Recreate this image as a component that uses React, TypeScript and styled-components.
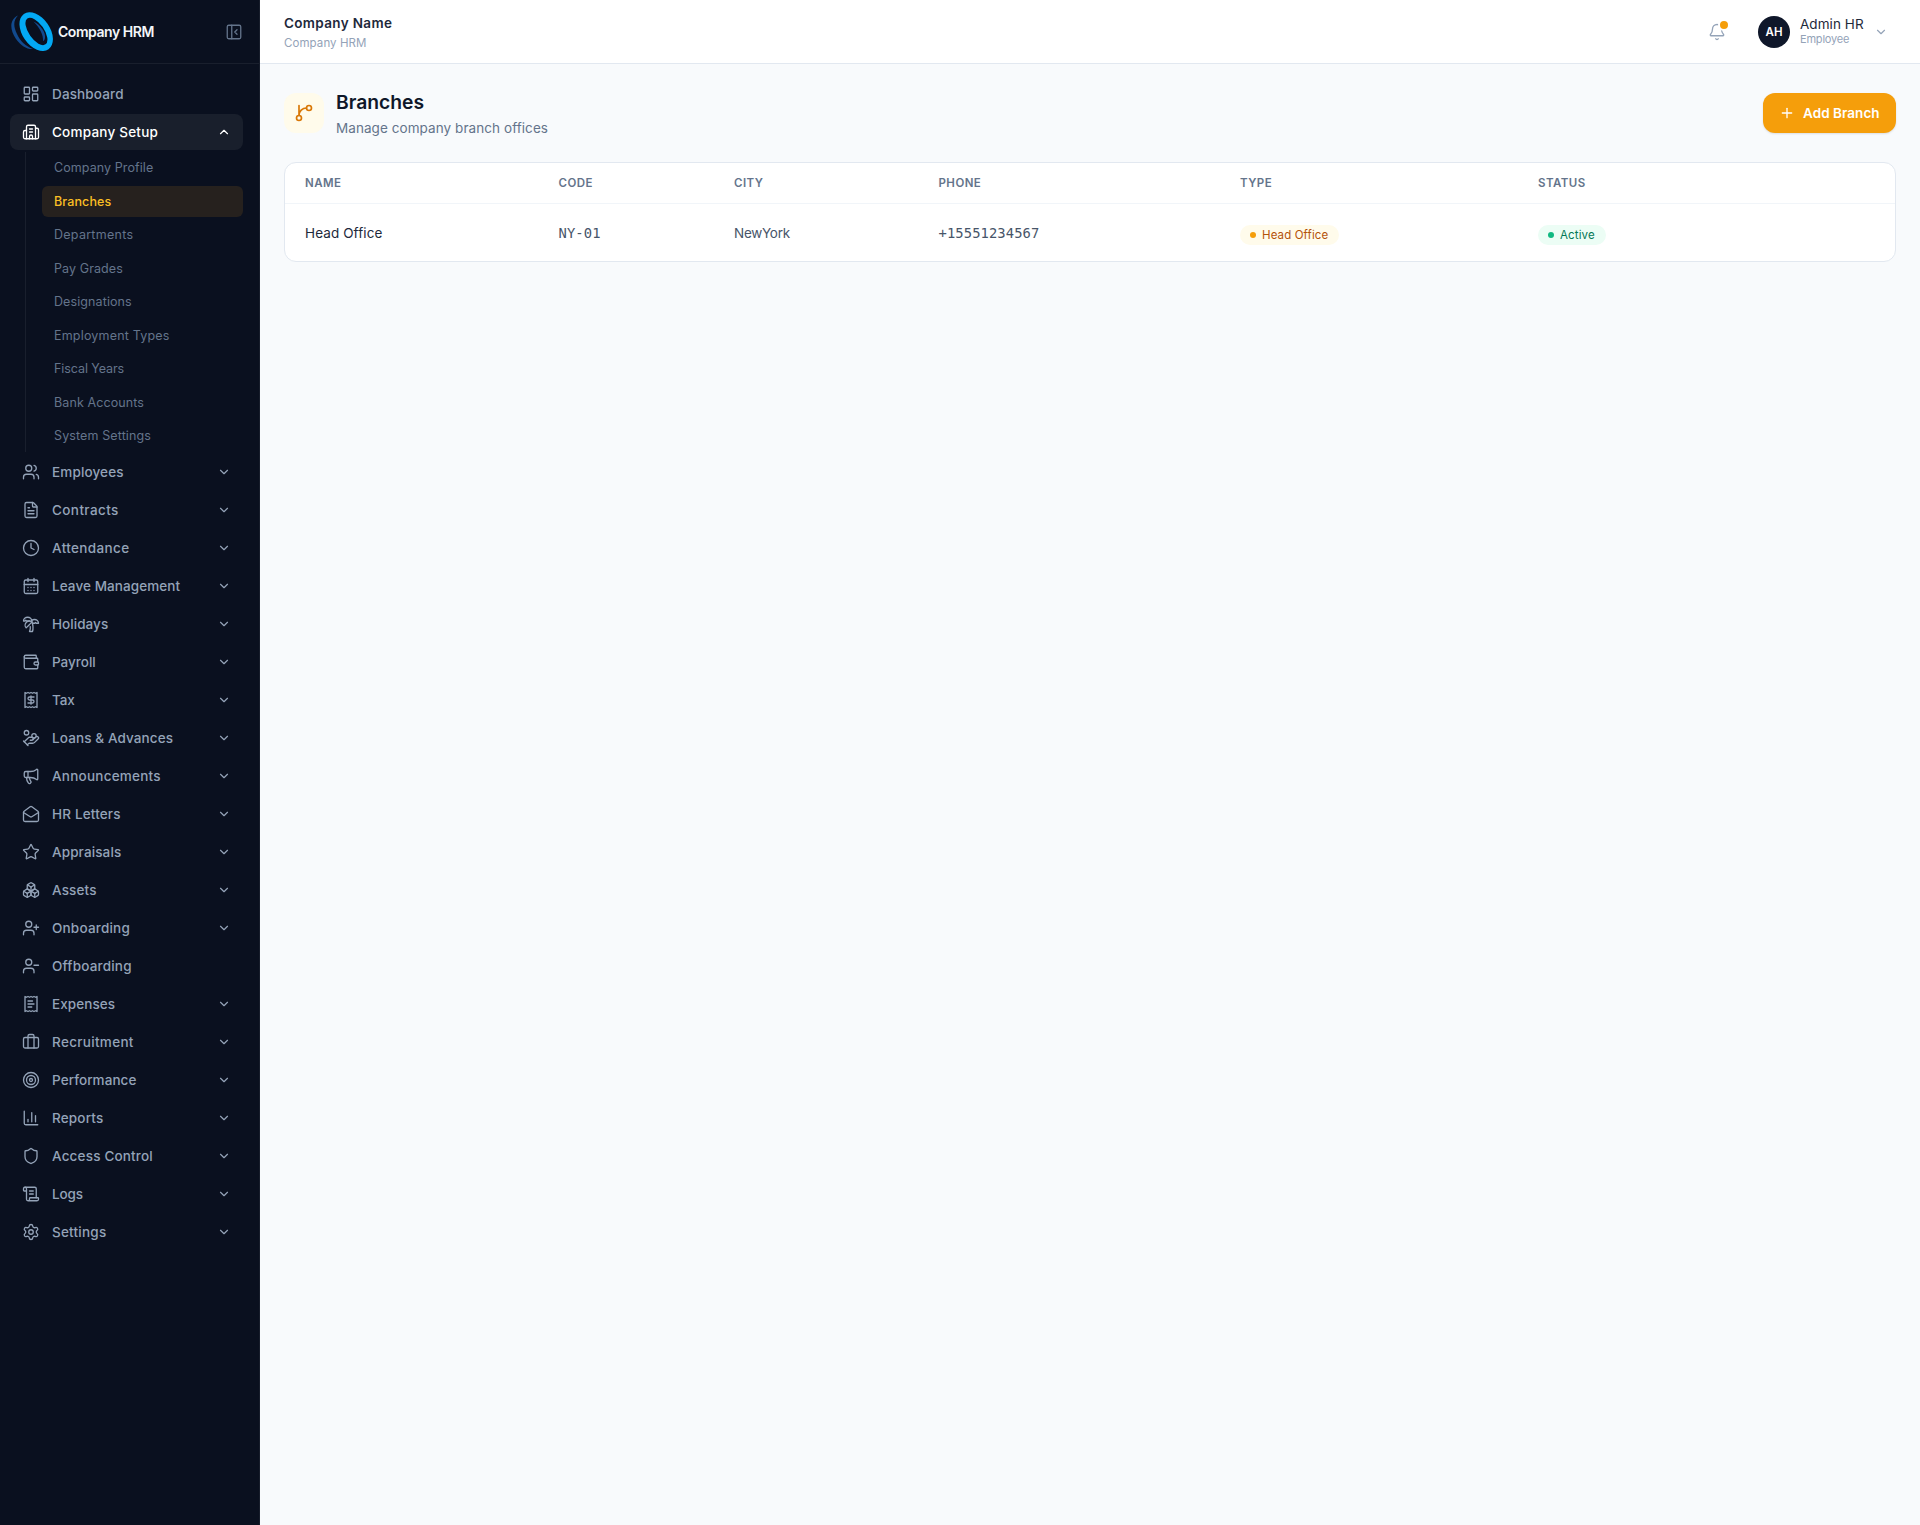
import React from "react";
import styled, { createGlobalStyle, css } from "styled-components";
import {
  LayoutDashboard, Building2, Users, FileText, Clock, CalendarDays, Palmtree, Wallet,
  HandCoins, Megaphone, MailOpen, Star, Boxes, UserPlus, UserMinus, Briefcase, Target,
  ChartColumn, Shield, ScrollText, Settings, ChevronDown, ChevronUp, PanelLeftClose, Bell, Plus,
} from "lucide-react";

const GlobalStyle = createGlobalStyle`
  *, *::before, *::after { box-sizing: border-box; }
  body { margin: 0; background: #f8fafc; font-family: "Inter", "Liberation Sans", sans-serif; }
  button { font: inherit; border: 0; background: none; padding: 0; cursor: pointer; }
`;

const Shell = styled.div`
  display: grid;
  grid-template-columns: 260px minmax(0, 1fr);
  min-height: 100vh;
`;

/* Sidebar */
const Sidebar = styled.aside`
  background: #0a101f;
  border-right: 1px solid #171d2b;
`;

const Brand = styled.div`
  display: flex;
  align-items: center;
  height: 64px;
  padding: 0 16px 0 10px;
  border-bottom: 1px solid #191f2d;
`;

const BrandName = styled.span`
  flex: 1;
  margin-left: 4px;
  font-size: 14px;
  font-weight: 600;
  letter-spacing: -0.45px;
  color: #f4f6f9;
`;

const CollapseButton = styled.button`
  display: flex;
  color: #64748b;
`;

const Nav = styled.nav`
  display: flex;
  flex-direction: column;
  gap: 2px;
  padding: 12px 16px 12px 10px;
`;

const NavItem = styled.a<{ $active?: boolean }>`
  display: flex;
  align-items: center;
  gap: 12px;
  height: 36px;
  padding: 0 12px;
  border-radius: 8px;
  color: ${(p) => (p.$active ? "#ffffff" : "#94a3b8")};
  background: ${(p) => (p.$active ? "#191f2c" : "transparent")};
`;

const NavLabel = styled.span<{ $track: number }>`
  flex: 1;
  font-size: 13.5px;
  font-weight: 500;
  white-space: nowrap;
  letter-spacing: ${(p) => p.$track}px;
`;

const SubNav = styled.div`
  display: flex;
  flex-direction: column;
  gap: 2px;
  margin-left: 15px;
  padding-left: 16px;
  border-left: 1px solid #191f2d;
`;

const SubItem = styled.a<{ $active?: boolean; $track: number }>`
  height: 31.5px;
  padding: 0 12px;
  border-radius: 6px;
  font-size: 12.5px;
  line-height: 31px;
  letter-spacing: ${(p) => p.$track}px;
  color: #64748b;
  ${(p) =>
    p.$active &&
    css`
      color: #fbbf24;
      font-weight: 500;
      background: #26211e;
    `}
`;

/* Top bar */
const Main = styled.div`
  display: flex;
  flex-direction: column;
`;

const TopBar = styled.header`
  display: flex;
  align-items: center;
  justify-content: space-between;
  height: 64px;
  padding: 0 32px 0 24px;
  background: #ffffff;
  border-bottom: 1px solid #e2e8f0;
`;

const CompanyBlock = styled.div`
  padding-top: 2px;
`;

const CompanyName = styled.div`
  font-size: 13.5px;
  line-height: 20px;
  font-weight: 600;
  letter-spacing: 0.34px;
  color: #1e293b;
`;

const CompanySub = styled.div`
  font-size: 11.5px;
  line-height: 20px;
  letter-spacing: 0.08px;
  color: #94a3b8;
`;

const TopActions = styled.div`
  display: flex;
  align-items: center;
`;

const BellButton = styled.button`
  position: relative;
  display: flex;
  margin-right: 32px;
  color: #94a3b8;
`;

const BellBadge = styled.span`
  position: absolute;
  top: -4px;
  right: -4px;
  width: 12px;
  height: 12px;
  border: 2px solid #ffffff;
  border-radius: 50%;
  background: #f59e0b;
`;

const Avatar = styled.div`
  display: grid;
  place-items: center;
  width: 32px;
  height: 32px;
  border-radius: 50%;
  background: #0f172a;
  color: #ffffff;
  font-size: 11.5px;
  font-weight: 600;
`;

const UserText = styled.div`
  width: 71px;
  margin: -2px 0 0 10px;
`;

const UserName = styled.div`
  font-size: 13.5px;
  line-height: 16px;
  letter-spacing: 0.06px;
  color: #1e293b;
  white-space: nowrap;
`;

const UserRole = styled.div`
  font-size: 11px;
  line-height: 14px;
  letter-spacing: -0.2px;
  color: #94a3b8;
`;

const UserChevron = styled(ChevronDown)`
  margin-left: 3px;
  color: #94a3b8;
`;

/* Page */
const Page = styled.main`
  padding: 24px;
`;

const PageHeader = styled.div`
  display: flex;
  align-items: center;
  height: 50px;
`;

const PageIcon = styled.div`
  display: grid;
  place-items: center;
  width: 40px;
  height: 40px;
  border-radius: 12px;
  background: #fffbeb;
  color: #d97706;
`;

const PageHeading = styled.div`
  flex: 1;
  margin-left: 12px;
  padding-top: 2px;
`;

const PageTitle = styled.h1`
  margin: 0;
  font-size: 19.3px;
  line-height: 28px;
  font-weight: 600;
  letter-spacing: 0;
  color: #0f172a;
`;

const PageSubtitle = styled.p`
  margin: 0;
  font-size: 13.5px;
  line-height: 24px;
  letter-spacing: 0.07px;
  color: #64748b;
`;

const AddButton = styled.button`
  display: flex;
  align-items: center;
  gap: 8px;
  width: 133px;
  height: 40px;
  padding-left: 16px;
  border-radius: 12px;
  background: #f59e0b;
  box-shadow: 0 1px 2px rgba(15, 23, 42, 0.12);
  color: #ffffff;
`;

const AddLabel = styled.span`
  font-size: 13.5px;
  font-weight: 600;
  letter-spacing: 0.05px;
  white-space: nowrap;
`;

/* Table */
const Card = styled.section`
  margin-top: 24px;
  border: 1px solid #e2e8f0;
  border-radius: 12px;
  background: #ffffff;
  overflow: hidden;
`;

const Row = styled.div<{ $head?: boolean }>`
  display: grid;
  grid-template-columns: 253.5px 175.5px 204.5px 301.5px 298px 1fr;
  align-items: center;
  height: ${(p) => (p.$head ? 41 : 57)}px;
  ${(p) => p.$head && "border-bottom: 1px solid #f1f5f9;"}
`;

const HeadCell = styled.div`
  padding: 0 20px;
  font-size: 11.5px;
  font-weight: 600;
  letter-spacing: 0.45px;
  text-transform: uppercase;
  color: #64748b;
`;

const Cell = styled.div<{ $kind?: "name" | "mono" }>`
  padding: 0 20px;
  font-size: 13.5px;
  line-height: 20px;
  letter-spacing: -0.28px;
  color: #475569;
  ${(p) =>
    p.$kind === "name" &&
    css`
      letter-spacing: 0.1px;
      color: #1e293b;
    `}
  ${(p) =>
    p.$kind === "mono" &&
    css`
      font-family: "DejaVu Sans Mono", "Liberation Mono", monospace;
      font-size: 13.8px;
      letter-spacing: 0.1px;
    `}
`;

const Badge = styled.span<{ $tone: "amber" | "green"; $width: number }>`
  display: flex;
  align-items: center;
  gap: 6px;
  width: ${(p) => p.$width}px;
  height: 20px;
  margin-top: 4px;
  padding-left: 10px;
  border-radius: 10px;
  font-size: 11.5px;
  letter-spacing: 0.12px;
  white-space: nowrap;
  color: ${(p) => (p.$tone === "amber" ? "#b45309" : "#047857")};
  background: ${(p) => (p.$tone === "amber" ? "#fffbeb" : "#ecfdf5")};

  &::before {
    content: "";
    width: 6px;
    height: 6px;
    border-radius: 50%;
    background: ${(p) => (p.$tone === "amber" ? "#f59e0b" : "#10b981")};
  }
`;

type IconProps = { size?: number | string; strokeWidth?: number | string };

const Glyph = ({ size = 18, strokeWidth = 1.75, children }: IconProps & { children: React.ReactNode }) => (
  <svg
    width={size}
    height={size}
    viewBox="0 0 24 24"
    fill="none"
    stroke="currentColor"
    strokeWidth={strokeWidth}
    strokeLinecap="round"
    strokeLinejoin="round"
    aria-hidden="true"
  >
    {children}
  </svg>
);

const RECEIPT_EDGE = "M4 2v20l2-1 2 1 2-1 2 1 2-1 2 1 2-1 2 1V2l-2 1-2-1-2 1-2-1-2 1-2-1-2 1Z";

const ReceiptDollar = (props: IconProps) => (
  <Glyph {...props}>
    <path d={RECEIPT_EDGE} />
    <path d="M16 8h-6a2 2 0 1 0 0 4h4a2 2 0 1 1 0 4H8" />
    <path d="M12 17.5v-11" />
  </Glyph>
);

const ReceiptLines = (props: IconProps) => (
  <Glyph {...props}>
    <path d={RECEIPT_EDGE} />
    <path d="M14 8H8M16 12H8M13 16H8" />
  </Glyph>
);

const BranchIcon = (props: IconProps) => (
  <Glyph {...props}>
    <path d="M15 6a9 9 0 0 0-9 9V3" />
    <circle cx="18" cy="6" r="3" />
    <circle cx="6" cy="18" r="3" />
  </Glyph>
);

const Logo = () => (
  <svg width="44" height="44" viewBox="10 10 44 44" aria-hidden="true">
    <path d="M18 15.5C10 19 9 29 16 39C21 46 27 49.5 33 49C26 46.5 20 41 17 34C13 26 13.5 20 18 15.5Z" fill="#124a8e" />
    <path d="M33.5 21.5C41 25 46 33 45 38C44.7 40 44 41 43 41C43.5 35 40 28 33.5 21.5Z" fill="#124a8e" />
    <path
      transform="translate(36.2 31.6) rotate(-35)"
      fill="#03a9f4"
      fillRule="evenodd"
      d="M0-21.5A13.8 21.5 0 0 1 0 21.5A13.8 21.5 0 0 1 0-21.5ZM.3-15.8A7.6 15.8 0 0 0 .3 15.8A7.6 15.8 0 0 0 .3-15.8Z"
    />
  </svg>
);

type Entry = { label: string; icon: React.ComponentType<IconProps>; track: number; leaf?: boolean };

const setupPages: [string, number][] = [
  ["Company Profile", 0.08],
  ["Branches", 0.12],
  ["Departments", 0.27],
  ["Pay Grades", 0.1],
  ["Designations", 0.1],
  ["Employment Types", 0.19],
  ["Fiscal Years", -0.08],
  ["Bank Accounts", 0.1],
  ["System Settings", 0.12],
];

const modules: Entry[] = [
  { label: "Employees", icon: Users, track: 0.14 },
  { label: "Contracts", icon: FileText, track: 0.4 },
  { label: "Attendance", icon: Clock, track: 0.36 },
  { label: "Leave Management", icon: CalendarDays, track: 0.08 },
  { label: "Holidays", icon: Palmtree, track: 0.05 },
  { label: "Payroll", icon: Wallet, track: 0 },
  { label: "Tax", icon: ReceiptDollar, track: -0.1 },
  { label: "Loans & Advances", icon: HandCoins, track: 0.11 },
  { label: "Announcements", icon: Megaphone, track: 0.24 },
  { label: "HR Letters", icon: MailOpen, track: 0.16 },
  { label: "Appraisals", icon: Star, track: 0.12 },
  { label: "Assets", icon: Boxes, track: 0.15 },
  { label: "Onboarding", icon: UserPlus, track: 0.2 },
  { label: "Offboarding", icon: UserMinus, track: 0.2, leaf: true },
  { label: "Expenses", icon: ReceiptLines, track: 0.08 },
  { label: "Recruitment", icon: Briefcase, track: 0.32 },
  { label: "Performance", icon: Target, track: 0.06 },
  { label: "Reports", icon: ChartColumn, track: 0.17 },
  { label: "Access Control", icon: Shield, track: 0.18 },
  { label: "Logs", icon: ScrollText, track: -0.1 },
  { label: "Settings", icon: Settings, track: 0.22 },
];

export default function App() {
  return (
    <>
      <GlobalStyle />
      <Shell>
        <Sidebar>
          <Brand>
            <Logo />
            <BrandName>Company HRM</BrandName>
            <CollapseButton aria-label="Collapse sidebar">
              <PanelLeftClose size={18} strokeWidth={1.75} />
            </CollapseButton>
          </Brand>
          <Nav>
            <NavItem>
              <LayoutDashboard size={18} strokeWidth={1.75} />
              <NavLabel $track={0.14}>Dashboard</NavLabel>
            </NavItem>
            <NavItem $active>
              <Building2 size={18} strokeWidth={1.75} />
              <NavLabel $track={0.22}>Company Setup</NavLabel>
              <ChevronUp size={14} />
            </NavItem>
            <SubNav>
              {setupPages.map(([label, track]) => (
                <SubItem key={label} $track={track} $active={label === "Branches"}>{label}</SubItem>
              ))}
            </SubNav>
            {modules.map(({ label, icon: Icon, track, leaf }) => (
              <NavItem key={label}>
                <Icon size={18} strokeWidth={1.75} />
                <NavLabel $track={track}>{label}</NavLabel>
                {!leaf && <ChevronDown size={14} />}
              </NavItem>
            ))}
          </Nav>
        </Sidebar>
        <Main>
          <TopBar>
            <CompanyBlock>
              <CompanyName>Company Name</CompanyName>
              <CompanySub>Company HRM</CompanySub>
            </CompanyBlock>
            <TopActions>
              <BellButton aria-label="Notifications">
                <Bell size={18} strokeWidth={1.75} />
                <BellBadge />
              </BellButton>
              <Avatar>AH</Avatar>
              <UserText>
                <UserName>Admin HR</UserName>
                <UserRole>Employee</UserRole>
              </UserText>
              <UserChevron size={14} />
            </TopActions>
          </TopBar>
          <Page>
            <PageHeader>
              <PageIcon><BranchIcon size={20} strokeWidth={2} /></PageIcon>
              <PageHeading>
                <PageTitle>Branches</PageTitle>
                <PageSubtitle>Manage company branch offices</PageSubtitle>
              </PageHeading>
              <AddButton>
                <Plus size={16} />
                <AddLabel>Add Branch</AddLabel>
              </AddButton>
            </PageHeader>
            <Card>
              <Row $head>
                {["Name", "Code", "City", "Phone", "Type", "Status"].map((h) => (
                  <HeadCell key={h}>{h}</HeadCell>
                ))}
              </Row>
              <Row>
                <Cell $kind="name">Head Office</Cell>
                <Cell $kind="mono">NY-01</Cell>
                <Cell>NewYork</Cell>
                <Cell $kind="mono">+15551234567</Cell>
                <Cell><Badge $tone="amber" $width={99}>Head Office</Badge></Cell>
                <Cell><Badge $tone="green" $width={68}>Active</Badge></Cell>
              </Row>
            </Card>
          </Page>
        </Main>
      </Shell>
    </>
  );
}
